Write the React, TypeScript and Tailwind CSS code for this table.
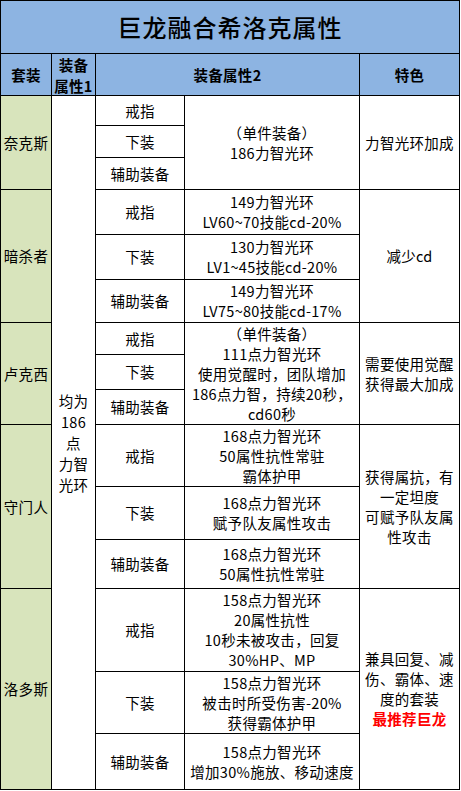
import React from 'react';

const font = { fontFamily: '"Noto Sans CJK SC", "Noto Sans", sans-serif' };

type CellProps = { className: string; children?: React.ReactNode };

const Cell = ({ className, children }: CellProps) => (
  <div className={`flex flex-col items-center justify-center text-center text-[14.5px] leading-[20px] tracking-[0.3px] text-black ${className}`}>
    {children}
  </div>
);

const Lines = ({ lines }: { lines: string[] }) => (
  <>
    {lines.map((l, i) => (
      <span key={i} className="whitespace-nowrap">{l}</span>
    ))}
  </>
);

export default function App() {
  return (
    <div className="w-[461px] bg-white" style={font}>
      <div className="grid w-[460px] gap-px border border-black bg-black grid-cols-[50px_43px_88px_174px_99px] grid-rows-[52px_41px_29px_31px_31px_44px_44px_42px_31px_34px_34px_61px_52px_48px_82px_61px_55px]">
        {/* title */}
        <Cell className="col-start-1 col-span-5 row-start-1 bg-[#8db4e2] !text-[24px] font-medium !tracking-[1px]">
          巨龙融合希洛克属性
        </Cell>

        {/* header */}
        <Cell className="col-start-1 row-start-2 bg-[#8db4e2] font-bold">套装</Cell>
        <Cell className="col-start-2 row-start-2 bg-[#8db4e2] font-bold !leading-[21px]">
          <Lines lines={['装备', '属性1']} />
        </Cell>
        <Cell className="col-start-3 col-span-2 row-start-2 bg-[#8db4e2] font-bold">装备属性2</Cell>
        <Cell className="col-start-5 row-start-2 bg-[#8db4e2] font-bold">特色</Cell>

        {/* set names */}
        <Cell className="col-start-1 row-start-3 row-span-3 bg-[#d8e4bc]">奈克斯</Cell>
        <Cell className="col-start-1 row-start-6 row-span-3 bg-[#d8e4bc]">暗杀者</Cell>
        <Cell className="col-start-1 row-start-9 row-span-3 bg-[#d8e4bc]">卢克西</Cell>
        <Cell className="col-start-1 row-start-12 row-span-3 bg-[#d8e4bc]">守门人</Cell>
        <Cell className="col-start-1 row-start-15 row-span-3 bg-[#d8e4bc]">洛多斯</Cell>

        {/* attr 1 */}
        <Cell className="col-start-2 row-start-3 row-span-15 bg-white !leading-[21px]">
          <Lines lines={['均为', '186', '点', '力智', '光环']} />
        </Cell>

        {/* slot column */}
        <Cell className="col-start-3 row-start-3 bg-white">戒指</Cell>
        <Cell className="col-start-3 row-start-4 bg-white">下装</Cell>
        <Cell className="col-start-3 row-start-5 bg-white">辅助装备</Cell>
        <Cell className="col-start-3 row-start-6 bg-white">戒指</Cell>
        <Cell className="col-start-3 row-start-7 bg-white">下装</Cell>
        <Cell className="col-start-3 row-start-8 bg-white">辅助装备</Cell>
        <Cell className="col-start-3 row-start-9 bg-white">戒指</Cell>
        <Cell className="col-start-3 row-start-10 bg-white">下装</Cell>
        <Cell className="col-start-3 row-start-11 bg-white">辅助装备</Cell>
        <Cell className="col-start-3 row-start-12 bg-white">戒指</Cell>
        <Cell className="col-start-3 row-start-13 bg-white">下装</Cell>
        <Cell className="col-start-3 row-start-14 bg-white">辅助装备</Cell>
        <Cell className="col-start-3 row-start-15 bg-white">戒指</Cell>
        <Cell className="col-start-3 row-start-16 bg-white">下装</Cell>
        <Cell className="col-start-3 row-start-17 bg-white">辅助装备</Cell>

        {/* attr 2 */}
        <Cell className="col-start-4 row-start-3 row-span-3 bg-white">
          <Lines lines={['（单件装备）', '186力智光环']} />
        </Cell>
        <Cell className="col-start-4 row-start-6 bg-white">
          <Lines lines={['149力智光环', 'LV60~70技能cd-20%']} />
        </Cell>
        <Cell className="col-start-4 row-start-7 bg-white">
          <Lines lines={['130力智光环', 'LV1~45技能cd-20%']} />
        </Cell>
        <Cell className="col-start-4 row-start-8 bg-white">
          <Lines lines={['149力智光环', 'LV75~80技能cd-17%']} />
        </Cell>
        <Cell className="col-start-4 row-start-9 row-span-3 bg-white">
          <Lines lines={['（单件装备）', '111点力智光环', '使用觉醒时，团队增加', '186点力智，持续20秒，', 'cd60秒']} />
        </Cell>
        <Cell className="col-start-4 row-start-12 bg-white">
          <Lines lines={['168点力智光环', '50属性抗性常驻', '霸体护甲']} />
        </Cell>
        <Cell className="col-start-4 row-start-13 bg-white">
          <Lines lines={['168点力智光环', '赋予队友属性攻击']} />
        </Cell>
        <Cell className="col-start-4 row-start-14 bg-white">
          <Lines lines={['168点力智光环', '50属性抗性常驻']} />
        </Cell>
        <Cell className="col-start-4 row-start-15 bg-white">
          <Lines lines={['158点力智光环', '20属性抗性', '10秒未被攻击，回复', '30%HP、MP']} />
        </Cell>
        <Cell className="col-start-4 row-start-16 bg-white">
          <Lines lines={['158点力智光环', '被击时所受伤害-20%', '获得霸体护甲']} />
        </Cell>
        <Cell className="col-start-4 row-start-17 bg-white">
          <Lines lines={['158点力智光环', '增加30%施放、移动速度']} />
        </Cell>

        {/* features */}
        <Cell className="col-start-5 row-start-3 row-span-3 bg-white">力智光环加成</Cell>
        <Cell className="col-start-5 row-start-6 row-span-3 bg-white">减少cd</Cell>
        <Cell className="col-start-5 row-start-9 row-span-3 bg-white">
          <Lines lines={['需要使用觉醒', '获得最大加成']} />
        </Cell>
        <Cell className="col-start-5 row-start-12 row-span-3 bg-white">
          <Lines lines={['获得属抗，有', '一定坦度', '可赋予队友属', '性攻击']} />
        </Cell>
        <Cell className="col-start-5 row-start-15 row-span-3 bg-white">
          <Lines lines={['兼具回复、减', '伤、霸体、速', '度的套装']} />
          <span className="whitespace-nowrap font-bold text-[#ff0000]">最推荐巨龙</span>
        </Cell>
      </div>
    </div>
  );
}
